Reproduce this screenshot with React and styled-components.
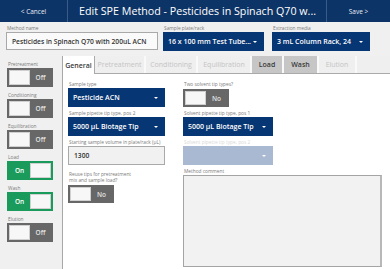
import React from "react";
import styled, { createGlobalStyle } from "styled-components";

const Global = createGlobalStyle`
  html, body { margin: 0; padding: 0; }
  body { font-family: "Open Sans", "Noto Sans", sans-serif; background: #f0f0f0; }
  * { box-sizing: border-box; }
`;

const Page = styled.div`
  width: 390px;
  height: 269px;
  overflow: hidden;
  display: flex;
  flex-direction: column;
  background: #f0f0f0;
`;

const Header = styled.header`
  height: 22px;
  flex: none;
  display: flex;
  align-items: stretch;
  background: #0d3466;
  color: #fff;
`;

const HeaderButton = styled.div`
  width: ${(p) => p.$w}px;
  flex: none;
  display: flex;
  align-items: center;
  justify-content: center;
  font-size: 6.5px;
  color: #e6ecf4;
  ${(p) => (p.$side === "left" ? "border-right" : "border-left")}: 1px solid #3a5b85;
`;

const Title = styled.h1`
  flex: 1;
  min-width: 0;
  margin: 0;
  padding-left: 11px;
  display: flex;
  align-items: center;
  font-size: 10.7px;
  font-weight: 400;
  white-space: nowrap;
`;

const TopFields = styled.div`
  flex: none;
  height: 34px;
  display: flex;
  padding: 3px 0 0 6px;
`;

const Field = styled.div`
  display: flex;
  flex-direction: column;
  width: ${(p) => (p.$w ? `${p.$w}px` : "auto")};
  margin-left: ${(p) => p.$ml || 0}px;
  margin-top: ${(p) => p.$mt || 0}px;
  flex: ${(p) => (p.$grow ? 1 : "none")};
`;

const Label = styled.div`
  font-size: 4.8px;
  line-height: 6px;
  height: ${(p) => (p.$lines ? p.$lines * 6 : 6)}px;
  margin-bottom: ${(p) => (p.$mb !== undefined ? p.$mb : 1)}px;
  color: ${(p) => (p.$faint ? "#d8d8d8" : "#7a7a7a")};
  white-space: nowrap;
  padding-left: 1px;
`;

const TextInput = styled.div`
  height: ${(p) => p.$h || 19}px;
  border: 1px solid #a9a9a9;
  background: ${(p) => p.$bg || "#fafafa"};
  color: #333;
  font-size: 6.7px;
  font-weight: 600;
  display: flex;
  align-items: center;
  padding-left: 5px;
  white-space: nowrap;
`;

const Select = styled.div`
  height: 19px;
  background: ${(p) => (p.$disabled ? "#a9b9d1" : "#073674")};
  color: #fff;
  font-size: 7px;
  font-weight: 600;
  display: flex;
  align-items: center;
  padding: 0 7px 0 5px;
  white-space: nowrap;
`;

const SelectText = styled.span`
  flex: 1;
  overflow: hidden;
`;

const Caret = styled.span`
  width: 0;
  height: 0;
  border-left: 2.5px solid transparent;
  border-right: 2.5px solid transparent;
  border-top: 2.5px solid #fff;
  flex: none;
`;

const Body = styled.div`
  flex: 1;
  display: flex;
  min-height: 0;
`;

const Side = styled.aside`
  width: 62px;
  flex: none;
  padding: 5px 0 0 7px;
  display: flex;
  flex-direction: column;
  gap: 5px;
`;

const ToggleGroup = styled.div`
  display: flex;
  flex-direction: column;
`;

const ToggleBox = styled.div`
  width: ${(p) => p.$w || 46}px;
  height: ${(p) => p.$h || 19}px;
  background: ${(p) => (p.$on ? "#1a9b5c" : "#676767")};
  padding: 2px;
  display: flex;
  flex-direction: ${(p) => (p.$on ? "row-reverse" : "row")};
  align-items: stretch;
`;

const Knob = styled.div`
  width: 50%;
  background: #f7f7f7;
  border: 1px solid #d0d0d0;
`;

const ToggleText = styled.div`
  flex: 1;
  display: flex;
  align-items: center;
  justify-content: center;
  font-size: 6.5px;
  font-weight: 600;
  color: ${(p) => (p.$on ? "#fff" : "#e2e2e2")};
`;

const Main = styled.main`
  flex: 1;
  display: flex;
  flex-direction: column;
  border-left: 1px solid #a8a8a8;
  min-width: 0;
`;

const TabBar = styled.nav`
  height: 18px;
  flex: none;
  display: flex;
  background: #efefef;
  border-bottom: 1px solid #aaaaaa;
`;

const Tab = styled.div`
  width: ${(p) => p.$w}px;
  flex: none;
  display: flex;
  align-items: center;
  justify-content: center;
  font-size: 7px;
  font-weight: ${(p) => (p.$active || p.$enabled ? 600 : 400)};
  color: ${(p) => (p.$active || p.$enabled ? "#3a3a3a" : "#c4c4c4")};
  background: ${(p) => (p.$active ? "#fff" : p.$enabled ? "#c6c6c6" : "#efefef")};
  border-right: ${(p) => (p.$active ? "1px solid #aaa" : "2px solid #f9f9f9")};
  margin-bottom: ${(p) => (p.$active ? "-1px" : "0")};
  height: ${(p) => (p.$active ? "19px" : "17px")};
`;

const Content = styled.section`
  flex: 1;
  background: #fff;
  display: flex;
  padding: 7px 8px 2px 5px;
  gap: 18px;
  min-height: 0;
`;

const Column = styled.div`
  width: ${(p) => (p.$w ? `${p.$w}px` : "auto")};
  flex: ${(p) => (p.$grow ? 1 : "none")};
  display: flex;
  flex-direction: column;
  gap: 3px;
`;

const Comment = styled.div`
  flex: 1;
  background: #f2f2f2;
  border: 1px solid #a4a4a4;
  border-right: 2px solid #b8b8b8;
`;

function Toggle({ on, w, h }) {
  return (
    <ToggleBox $on={on} $w={w} $h={h}>
      <Knob />
      <ToggleText $on={on}>{on ? "On" : "Off"}</ToggleText>
    </ToggleBox>
  );
}

function YesNo() {
  return (
    <ToggleBox $w={46} $h={18}>
      <Knob />
      <ToggleText>No</ToggleText>
    </ToggleBox>
  );
}

const steps = [
  ["Pretreatment", false],
  ["Conditioning", false],
  ["Equilibration", false],
  ["Load", true],
  ["Wash", true],
  ["Elution", false],
];

const tabs = [
  ["General", 32, "active"],
  ["Pretreatment", 51],
  ["Conditioning", 52],
  ["Equilibration", 54],
  ["Load", 32, "enabled"],
  ["Wash", 35, "enabled"],
  ["Elution", 38],
];

export default function App() {
  return (
    <>
      <Global />
      <Page>
        <Header>
          <HeaderButton $w={68} $side="left">&lt; Cancel</HeaderButton>
          <Title>Edit SPE Method - Pesticides in Spinach Q70 w...</Title>
          <HeaderButton $w={64} $side="right">Save &gt;</HeaderButton>
        </Header>
        <TopFields>
          <Field $w={152}>
            <Label>Method name</Label>
            <TextInput $h={18}>Pesticides in Spinach Q70 with 200uL ACN</TextInput>
          </Field>
          <Field $w={101} $ml={5}>
            <Label>Sample plate/rack</Label>
            <Select>
              <SelectText>16 x 100 mm Test Tube...</SelectText>
              <Caret />
            </Select>
          </Field>
          <Field $w={98} $ml={8}>
            <Label>Extraction media</Label>
            <Select>
              <SelectText>3 mL Column Rack, 24</SelectText>
              <Caret />
            </Select>
          </Field>
        </TopFields>
        <Body>
          <Side>
            {steps.map(([name, on]) => (
              <ToggleGroup key={name}>
                <Label>{name}</Label>
                <Toggle on={on} />
              </ToggleGroup>
            ))}
          </Side>
          <Main>
            <TabBar>
              {tabs.map(([name, w, state]) => (
                <Tab key={name} $w={w} $active={state === "active"} $enabled={state === "enabled"}>
                  {name}
                </Tab>
              ))}
            </TabBar>
            <Content>
              <Column $w={97}>
                <Field>
                  <Label>Sample type</Label>
                  <Select>
                    <SelectText>Pesticide ACN</SelectText>
                    <Caret />
                  </Select>
                </Field>
                <Field>
                  <Label>Sample pipette tip type, pos 2</Label>
                  <Select>
                    <SelectText>5000 µL Biotage Tip</SelectText>
                    <Caret />
                  </Select>
                </Field>
                <Field>
                  <Label>Starting sample volume in plate/rack (µL)</Label>
                  <TextInput $bg="#f1f1f1">1300</TextInput>
                </Field>
                <Field $mt={3}>
                  <Label $lines={2} $mb={2}>
                    Reuse tips for pretreatment
                    <br />
                    mix and sample load?
                  </Label>
                  <YesNo />
                </Field>
              </Column>
              <Column $grow>
                <Field>
                  <Label $mb={2}>Two solvent tip types?</Label>
                  <YesNo />
                </Field>
                <Field $w={90}>
                  <Label>Solvent pipette tip type, pos 1</Label>
                  <Select>
                    <SelectText>5000 µL Biotage Tip</SelectText>
                    <Caret />
                  </Select>
                </Field>
                <Field $w={90}>
                  <Label $faint>Solvent pipette tip type, pos 2</Label>
                  <Select $disabled>
                    <SelectText></SelectText>
                    <Caret />
                  </Select>
                </Field>
                <Field $grow>
                  <Label>Method comment</Label>
                  <Comment />
                </Field>
              </Column>
            </Content>
          </Main>
        </Body>
      </Page>
    </>
  );
}
